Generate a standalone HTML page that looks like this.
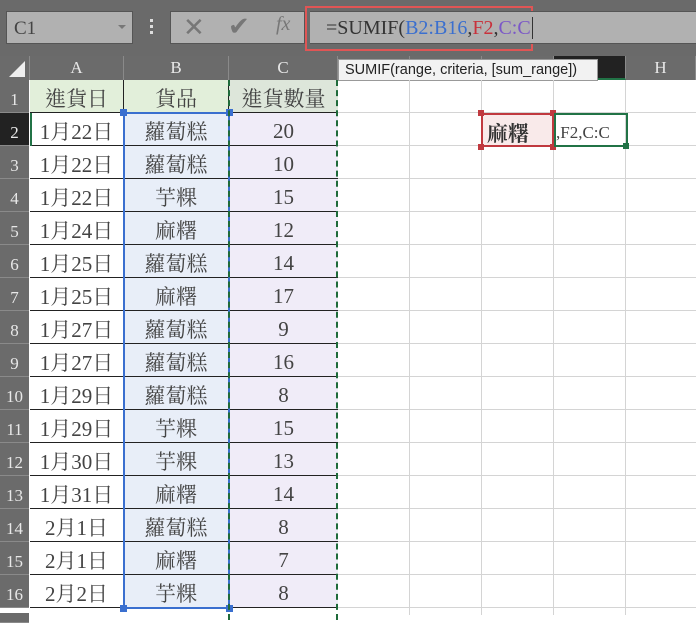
<!DOCTYPE html>
<html><head><meta charset="utf-8"><style>
*{margin:0;padding:0;box-sizing:border-box}
body{width:696px;height:615px;overflow:hidden;background:#fff;position:relative;font-family:"Liberation Serif","Noto Serif CJK TC","Noto Serif CJK SC",serif}
.a{position:absolute}
.c{position:absolute;display:flex;align-items:center;justify-content:center;font-size:21px;color:#444;padding-top:4px}
.rh{position:absolute;left:0;width:29px;background:#6b6b6b;color:#e8e8e8;font-size:17px;display:flex;align-items:flex-end;justify-content:center;padding-bottom:2px;border-bottom:1px solid #8a8a8a}
.ch{position:absolute;top:56px;height:24px;background:#6b6b6b;color:#e8e8e8;font-size:17px;display:flex;align-items:center;justify-content:center;border-right:1px solid #8a8a8a}
</style></head><body>
<div class="a" style="left:0;top:0;width:696px;height:56px;background:#6a6a6a"></div>
<div class="a" style="left:6px;top:11px;width:127px;height:33px;background:#b1b1b1;border:1px solid #555;font-size:19px;color:#444;padding:6px 0 0 7px">C1</div>
<div class="a" style="left:118px;top:25px;width:0;height:0;border-left:4px solid transparent;border-right:4px solid transparent;border-top:4px solid #777"></div>
<div class="a" style="left:150px;top:19px;width:3px;height:3px;background:#ddd;box-shadow:0 6px #ddd,0 12px #ddd"></div>
<div class="a" style="left:170px;top:11px;width:135px;height:33px;background:#b1b1b1;border:1px solid #555"></div>
<div class="a" style="left:183px;top:12px;font-family:'Liberation Sans',sans-serif;font-size:26px;color:#777">✕</div>
<div class="a" style="left:228px;top:12px;font-size:26px;color:#777">✔</div>
<div class="a" style="left:276px;top:13px;font-size:20px;color:#777;font-style:italic">fx</div>
<div class="a" style="left:305px;top:6px;width:228px;height:45px;border:2px solid #e05555"></div>
<div class="a" style="left:310px;top:11px;width:386px;height:33px;background:#b1b1b1;border-top:1px solid #555;border-bottom:1px solid #555"></div>
<div class="a" style="left:326px;top:17px;font-size:20px;color:#333;white-space:nowrap">=SUMIF(<span style="color:#3a6fcf">B2:B16</span>,<span style="color:#c8323c">F2</span>,<span style="color:#7b58c7">C:C</span><span style="border-left:1px solid #333;margin-left:1px"></span></div>
<div class="ch" style="left:0;width:30px"></div>
<div class="a" style="left:9px;top:61px;width:0;height:0;border-left:16px solid transparent;border-bottom:16px solid #eee"></div>
<div class="ch" style="left:30px;width:94px">A</div>
<div class="ch" style="left:124px;width:105px">B</div>
<div class="ch" style="left:229px;width:109px">C</div>
<div class="ch" style="left:338px;width:72px"></div>
<div class="ch" style="left:410px;width:72px"></div>
<div class="ch" style="left:482px;width:72px"></div>
<div class="ch" style="left:554px;width:72px;background:#222;border-bottom:2px solid #217346"></div>
<div class="ch" style="left:626px;width:70px">H</div>
<div class="a" style="left:338px;top:59px;width:260px;height:22px;background:#f2f2f2;border:1px solid #999;font-family:'Liberation Sans',sans-serif;font-size:14.5px;color:#222;padding:2px 0 0 6px;white-space:nowrap">SUMIF(range, criteria, [sum_range])</div>
<div class="a" style="left:30px;top:80px;width:666px;height:535px;background-image:linear-gradient(#d4d4d4 1px,transparent 1px);background-size:100% 33px;background-position:0 32px"></div>
<div class="a" style="left:409px;top:80px;width:1px;height:535px;background:#d4d4d4"></div>
<div class="a" style="left:481px;top:80px;width:1px;height:535px;background:#d4d4d4"></div>
<div class="a" style="left:553px;top:80px;width:1px;height:535px;background:#d4d4d4"></div>
<div class="a" style="left:625px;top:80px;width:1px;height:535px;background:#d4d4d4"></div>
<div id="g"></div>
<script>
var A=["進貨日","1月22日","1月22日","1月22日","1月24日","1月25日","1月25日","1月27日","1月27日","1月29日","1月29日","1月30日","1月31日","2月1日","2月1日","2月2日"];
var B=["貨品","蘿蔔糕","蘿蔔糕","芋粿","麻糬","蘿蔔糕","麻糬","蘿蔔糕","蘿蔔糕","蘿蔔糕","芋粿","芋粿","麻糬","蘿蔔糕","麻糬","芋粿"];
var C=["進貨數量","20","10","15","12","14","17","9","16","8","15","13","14","8","7","8"];
var h="";
for(var i=0;i<16;i++){var t=80+i*33;
h+='<div class="rh" style="top:'+t+'px;height:33px;'+(i==1?'background:#222;':'')+'">'+(i+1)+'</div>';
var bg0=i==0?'#e2efda':'#fff',bg1=i==0?'#e2efda':'#e8eef8',bg2=i==0?'#dde6da':'#f0ecf8';
h+='<div class="c" style="left:30px;top:'+t+'px;width:94px;height:33px;background:'+bg0+';border-right:1px solid #222;border-bottom:1px solid #222">'+A[i]+'</div>';
h+='<div class="c" style="left:124px;top:'+t+'px;width:105px;height:33px;background:'+bg1+';border-right:1px solid #222;border-bottom:1px solid #222">'+B[i]+'</div>';
h+='<div class="c" style="left:229px;top:'+t+'px;width:109px;height:33px;background:'+bg2+';border-bottom:1px solid #222">'+C[i]+'</div>';}
h+='<div class="rh" style="top:613px;height:10px"></div>';
document.getElementById("g").innerHTML=h;
</script>
<div class="a" style="left:123px;top:112px;width:107px;height:497px;border:2px solid #3a6fcf"></div>
<div class="a" style="left:120px;top:109px;width:7px;height:7px;background:#3a6fcf"></div>
<div class="a" style="left:226px;top:109px;width:7px;height:7px;background:#3a6fcf"></div>
<div class="a" style="left:120px;top:605px;width:7px;height:7px;background:#3a6fcf"></div>
<div class="a" style="left:226px;top:605px;width:7px;height:7px;background:#3a6fcf"></div>
<div class="a" style="left:228px;top:80px;width:110px;height:540px;border-left:2px dashed #1f6b3a;border-right:2px dashed #1f6b3a"></div>
<div class="a" style="left:30px;top:113px;width:2px;height:33px;background:#217346"></div>
<div class="a" style="left:481px;top:113px;width:73px;height:34px;background:#f9eaea;border:2px solid #c0393f;font-weight:bold;font-size:21px;color:#333;padding:3px 0 0 4px">麻糬</div>
<div class="a" style="left:478px;top:110px;width:6px;height:6px;background:#c0393f"></div>
<div class="a" style="left:550px;top:110px;width:6px;height:6px;background:#c0393f"></div>
<div class="a" style="left:478px;top:144px;width:6px;height:6px;background:#c0393f"></div>
<div class="a" style="left:550px;top:144px;width:6px;height:6px;background:#c0393f"></div>
<div class="a" style="left:554px;top:113px;width:74px;height:34px;border:2px solid #217346;font-size:17px;color:#444;padding:8px 0 0 0">,F2,C:C</div>
<div class="a" style="left:623px;top:143px;width:6px;height:6px;background:#217346"></div>
</body></html>
